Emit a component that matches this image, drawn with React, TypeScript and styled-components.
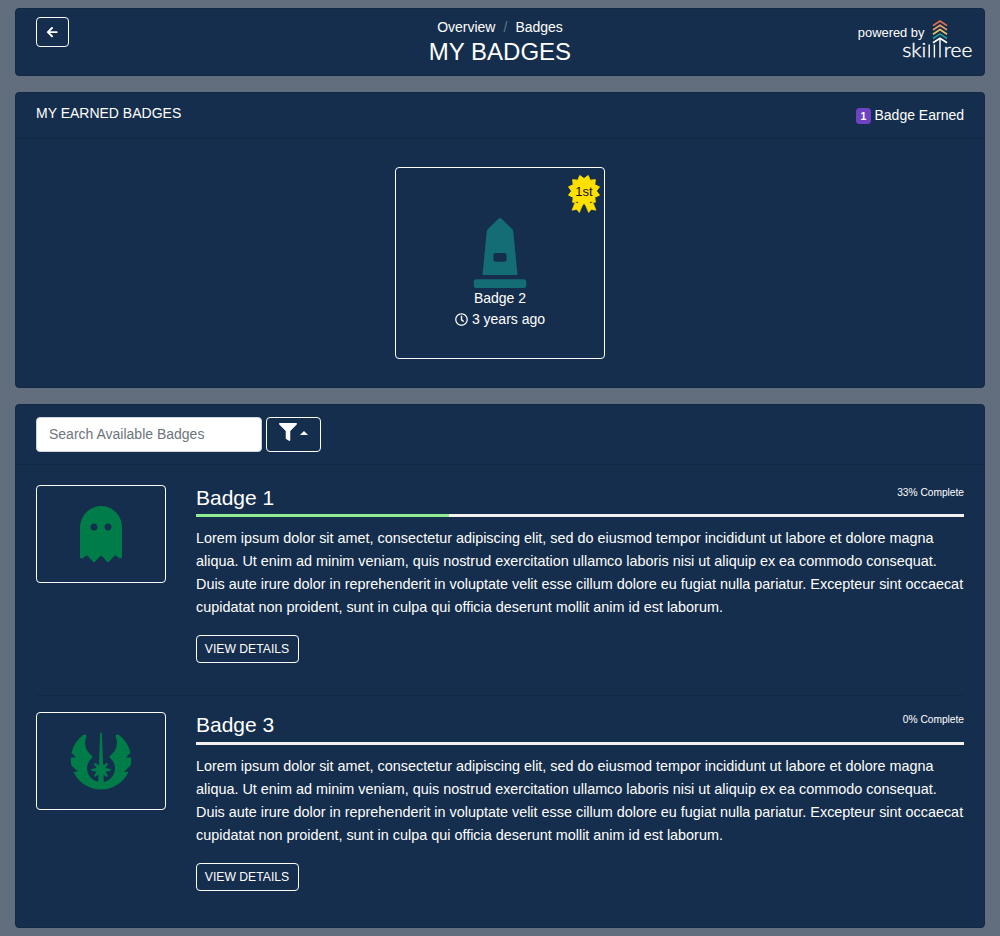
import React from 'react';
import styled, { createGlobalStyle } from 'styled-components';
import { FaArrowLeft, FaFilter, FaGhost, FaJedi, FaMonument, FaRegClock } from 'react-icons/fa';

const GlobalStyle = createGlobalStyle`
  *, *::before, *::after { box-sizing: border-box; }
  body {
    margin: 0;
    background: #626d7d;
    color: #fff;
    font-family: "Liberation Sans", Arial, sans-serif;
    font-size: 14px;
    line-height: 21px;
  }
  svg { display: block; flex: none; }
`;

const Page = styled.main`
  display: flex;
  flex-direction: column;
  gap: 16px;
  padding: 8px 15px;
`;

const Card = styled.section<{ $height: number }>`
  height: ${(p) => p.$height}px;
  background: #152e4d;
  border: 1px solid #132843;
  border-radius: 4px;
`;

const TitleBar = styled.header`
  display: grid;
  grid-template-columns: 1fr auto 1fr;
  padding: 8px 20px 0;
`;

const OutlineButton = styled.button<{ $width: number; $height: number; $size?: number; $gap?: number }>`
  display: flex;
  align-items: center;
  justify-content: center;
  gap: ${(p) => p.$gap ?? 0}px;
  width: ${(p) => p.$width}px;
  height: ${(p) => p.$height}px;
  padding: 0;
  color: #fff;
  background: transparent;
  border: 1px solid #fff;
  border-radius: 4px;
  font: ${(p) => p.$size ?? 14}px "Liberation Sans", Arial, sans-serif;
  white-space: nowrap;
`;

const FilterButton = styled(OutlineButton)`
  padding-bottom: 4.5px;
`;

const DetailsButton = styled(OutlineButton)`
  padding-right: 1px;
`;

const Heading = styled.div`
  text-align: center;
`;

const Breadcrumb = styled.nav`
  display: flex;
  justify-content: center;
  gap: 8px;
`;

const Slash = styled.span`
  color: #6c757d;
`;

const PageTitle = styled.h1`
  margin: -2px 0 0;
  font-size: 24px;
  font-weight: 400;
  line-height: 31px;
`;

const Brand = styled.div`
  display: flex;
  justify-content: flex-end;
  margin-right: -8px;
  padding-top: 2px;
`;

const PoweredBy = styled.span`
  margin-right: -22.5px;
  padding-top: 3px;
  font-size: 12.9px;
`;

const SectionHeader = styled.header<{ $height: number }>`
  display: flex;
  justify-content: space-between;
  height: ${(p) => p.$height}px;
  padding: ${(p) => (p.$height > 50 ? '12px' : '10px')} 20px 0;
  border-bottom: 1px solid #132843;
`;

const SectionTitle = styled.h2`
  margin: 0;
  font-size: 14px;
  font-weight: 400;
`;

const EarnedCount = styled.div`
  display: flex;
  align-items: center;
  gap: 3.5px;
  height: 21px;
  margin-top: 2px;
`;

const CountPill = styled.span`
  width: 15px;
  height: 16px;
  margin-top: 1px;
  border-radius: 3.5px;
  background: #6f42c1;
  font-size: 10.5px;
  font-weight: 700;
  line-height: 17px;
  text-align: center;
`;

const EarnedBadge = styled.article`
  position: relative;
  display: flex;
  flex-direction: column;
  align-items: center;
  width: 210px;
  height: 192px;
  margin: 28px auto 0;
  padding-top: 50px;
  border: 1px solid #fff;
  border-radius: 4px;
`;

const EarnedTime = styled.div`
  display: flex;
  align-items: center;
  gap: 4px;
`;

const Seal = styled.div`
  position: absolute;
  top: 6px;
  right: 3px;
  width: 34px;
  height: 40px;
`;

const SealLabel = styled.span`
  position: absolute;
  inset: 8px 0 auto;
  color: #111;
  font-size: 13px;
  line-height: 20px;
  text-align: center;
`;

const SearchGroup = styled.div`
  display: flex;
  gap: 4px;
`;

const SearchInput = styled.input`
  width: 226px;
  height: 35px;
  padding: 0 12px 2px;
  border: 1px solid #ced4da;
  border-radius: 4px;
  background: #fff;
  font: 14px "Liberation Sans", Arial, sans-serif;
  &::placeholder { color: #6c757d; opacity: 1; }
`;

const Caret = styled.span`
  margin-top: 2px;
  border: 4px solid transparent;
  border-top: 0;
  border-bottom-color: #fff;
`;

const BadgeRow = styled.article<{ $divided?: boolean }>`
  display: flex;
  gap: 30px;
  height: ${(p) => (p.$divided ? 231.4 : 210)}px;
  margin: 0 20px;
  padding-top: ${(p) => (p.$divided ? 20 : 16)}px;
  border-bottom: ${(p) => (p.$divided ? '1px solid #132843' : '0')};
`;

const IconFrame = styled.div`
  display: flex;
  flex: none;
  align-items: center;
  justify-content: center;
  width: 130px;
  height: 98px;
  border: 1px solid #fff;
  border-radius: 4px;
  color: #007c49;
`;

const BadgeBody = styled.div`
  flex: 1;
  min-width: 0;
`;

const BadgeTop = styled.div`
  display: flex;
  justify-content: space-between;
  height: 29.25px;
`;

const BadgeName = styled.h3`
  margin: 0;
  font-size: 21px;
  font-weight: 400;
  line-height: 25px;
`;

const Completion = styled.span`
  font-size: 10.2px;
  line-height: 15px;
`;

const Track = styled.div`
  height: 3px;
  background: #f5f1f0;
`;

const Fill = styled.div`
  height: 3px;
  background: #90ee90;
`;

const Description = styled.p`
  margin: 10px 0 16px;
  font-size: 14.4px;
  line-height: 23px;
`;

const LogoSvg = styled.svg`
  overflow: visible;
`;

const LogoText = styled.text`
  fill: #fff;
  stroke: #fff;
  stroke-width: 0.35px;
  font-family: Lato, "Open Sans", sans-serif;
  font-size: 19px;
  font-weight: 300;
`;

const BrandLogo = () => (
  <LogoSvg width="70" height="44" viewBox="0 0 70 44" fill="none">
    {['#e76f51', '#f4a261', '#e9c46a', '#2a9d8f', '#ffffff'].map((color, i) => (
      <path key={color} d={`M31 ${6.6 + i * 4.3}L38 ${2 + i * 4.3}L45 ${6.6 + i * 4.3}`} stroke={color} strokeWidth="1.7" />
    ))}
    <path d="M27.2 25.5V38.5M32.4 25.5V38.5M38 19.5V38.5" stroke="#fff" strokeWidth="1.4" />
    <LogoText x="0.3" y="38.2" textLength="24" lengthAdjust="spacingAndGlyphs">ski</LogoText>
    <LogoText x="41.8" y="38.2" textLength="28.6" lengthAdjust="spacingAndGlyphs">ree</LogoText>
  </LogoSvg>
);

// Twelve-pointed burst with a valley at the top centre.
const sealPoints = Array.from({ length: 24 }, (_, i) => {
  const angle = ((i + 1) * Math.PI) / 12 - Math.PI / 2;
  const radius = i % 2 === 0 ? 16 : 12.4;
  return `${17 + Math.cos(angle) * radius},${17 + Math.sin(angle) * radius}`;
}).join(' ');

const FirstSeal = () => (
  <Seal>
    <svg width="34" height="40" viewBox="0 0 34 40" fill="#ffe000" stroke="#ffe000" strokeLinejoin="round">
      <polygon points={sealPoints} strokeWidth="1" />
      <path
        d="M8 28.6L5 36.2L9.8 35.4L12.3 38.6L16.2 29.8ZM26 28.6L29 36.2L24.2 35.4L21.7 38.6L17.8 29.8Z"
        strokeWidth="0.6"
      />
      <path d="M9.2 28.2L11 28.7M24.8 28.2L23 28.7" stroke="#152e4d" strokeWidth="0.7" />
    </svg>
    <SealLabel>1st</SealLabel>
  </Seal>
);

const badges = [
  { name: 'Badge 1', percent: 33, icon: <FaGhost size={56} /> },
  { name: 'Badge 3', percent: 0, icon: <FaJedi size={64} /> },
];

const summary =
  'Lorem ipsum dolor sit amet, consectetur adipiscing elit, sed do eiusmod tempor incididunt ut labore et dolore magna aliqua. Ut enim ad minim veniam, quis nostrud exercitation ullamco laboris nisi ut aliquip ex ea commodo consequat. Duis aute irure dolor in reprehenderit in voluptate velit esse cillum dolore eu fugiat nulla pariatur. Excepteur sint occaecat cupidatat non proident, sunt in culpa qui officia deserunt mollit anim id est laborum.';

export default function App() {
  return (
    <Page>
      <GlobalStyle />
      <Card $height={68}>
        <TitleBar>
          <OutlineButton $width={33} $height={30} aria-label="Back">
            <FaArrowLeft size={12.25} />
          </OutlineButton>
          <Heading>
            <Breadcrumb>
              <span>Overview</span>
              <Slash>/</Slash>
              <span>Badges</span>
            </Breadcrumb>
            <PageTitle>MY BADGES</PageTitle>
          </Heading>
          <Brand>
            <PoweredBy>powered by</PoweredBy>
            <BrandLogo />
          </Brand>
        </TitleBar>
      </Card>
      <Card $height={296}>
        <SectionHeader $height={46}>
          <SectionTitle>MY EARNED BADGES</SectionTitle>
          <EarnedCount>
            <CountPill>1</CountPill>
            Badge Earned
          </EarnedCount>
        </SectionHeader>
        <EarnedBadge>
          <FirstSeal />
          <FaMonument size={70} color="#146c75" />
          <span>Badge 2</span>
          <EarnedTime>
            <FaRegClock size={13} />
            3 years ago
          </EarnedTime>
        </EarnedBadge>
      </Card>
      <Card $height={524}>
        <SectionHeader $height={60}>
          <SearchGroup>
            <SearchInput placeholder="Search Available Badges" />
            <FilterButton $width={55} $height={35} $gap={3} aria-label="Filter">
              <FaFilter size={18} />
              <Caret />
            </FilterButton>
          </SearchGroup>
        </SectionHeader>
        {badges.map((badge, index) => (
          <BadgeRow key={badge.name} $divided={index < badges.length - 1}>
            <IconFrame>{badge.icon}</IconFrame>
            <BadgeBody>
              <BadgeTop>
                <BadgeName>{badge.name}</BadgeName>
                <Completion>{badge.percent}% Complete</Completion>
              </BadgeTop>
              <Track>
                <Fill style={{ width: `${badge.percent}%` }} />
              </Track>
              <Description>{summary}</Description>
              <DetailsButton $width={103} $height={28} $size={12.2}>
                VIEW DETAILS
              </DetailsButton>
            </BadgeBody>
          </BadgeRow>
        ))}
      </Card>
    </Page>
  );
}
